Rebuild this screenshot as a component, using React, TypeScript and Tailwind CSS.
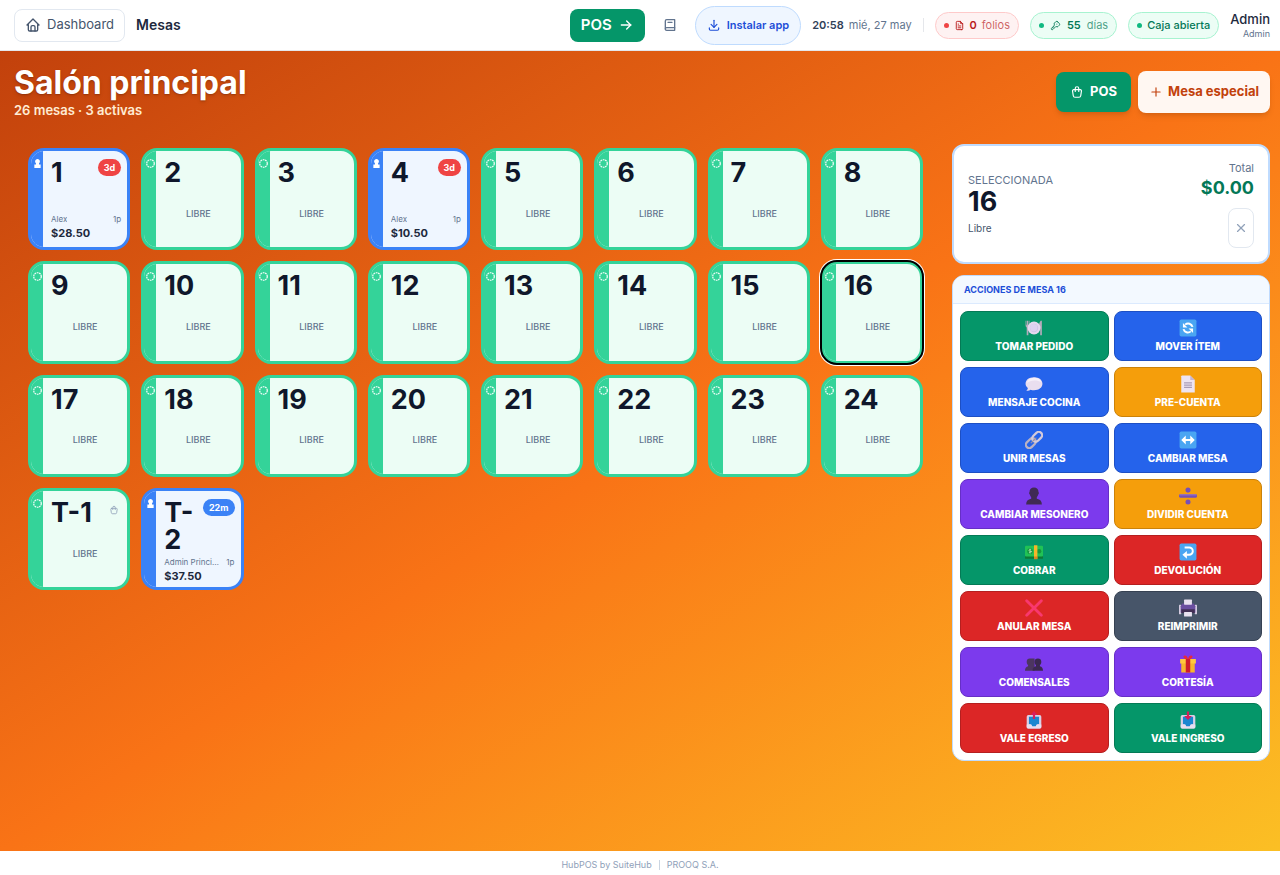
import { ReactNode, useState } from "react";
import clsx from "clsx";
import {
  TbArrowRight,
  TbBook2,
  TbDownload,
  TbFileText,
  TbHome,
  TbKey,
  TbPlus,
  TbShoppingBag,
  TbX,
} from "react-icons/tb";

interface Mesa {
  name: string;
  waiter?: string;
  guests?: number;
  total?: number;
  time?: string;
  late?: boolean;
  takeaway?: boolean;
}

const occupied: Record<string, Mesa> = {
  "1": { name: "1", waiter: "Alex", guests: 1, total: 28.5, time: "3d", late: true },
  "4": { name: "4", waiter: "Alex", guests: 1, total: 10.5, time: "3d", late: true },
};

const mesas: Mesa[] = [
  ...Array.from({ length: 24 }, (_, i) => occupied[String(i + 1)] ?? { name: String(i + 1) }),
  { name: "T-1", takeaway: true },
  { name: "T-2", waiter: "Admin Principal", guests: 1, total: 37.5, time: "22m" },
];

const money = (value: number) => `$${value.toFixed(2)}`;

const Emoji = ({ children }: { children: ReactNode }) => (
  <svg viewBox="0 0 32 32" className="h-[18px] w-[18px]" aria-hidden="true">
    {children}
  </svg>
);

const PlateIcon = () => (
  <Emoji>
    <path d="M1 3v8q0 3 2 4v14h3V15q2-1 2-4V3H6.500v7h-1V3h-2v7h-1V3z" fill="#b4aabb" />
    <path d="M28 3q-4 3-3 14h2v12h3V3z" fill="#b4aabb" />
    <circle cx="16" cy="16" r="11.500" fill="#e3d8ee" />
    <circle cx="16" cy="16" r="7.500" fill="#cfc2e6" />
    <circle cx="15.500" cy="15.500" r="6.500" fill="#ddd2f0" />
  </Emoji>
);

const BlueTile = ({ children }: { children: ReactNode }) => (
  <Emoji>
    <rect x="1" y="1" width="30" height="30" rx="3" fill="#4aa5f2" />
    <g fill="none" stroke="#fff" strokeWidth="3.500">
      {children}
    </g>
  </Emoji>
);

const RefreshIcon = () => (
  <BlueTile>
    <path d="M24 14a8 8 0 0 0-13-4M8 18a8 8 0 0 0 13 4" />
    <path d="M7 7v8h8zM25 25v-8h-8z" fill="#fff" stroke="none" />
  </BlueTile>
);

const SwapIcon = () => (
  <BlueTile>
    <path d="M9 16h14" />
    <path d="M12 8v16l-8-8zM20 8v16l8-8z" fill="#fff" stroke="none" />
  </BlueTile>
);

const ReturnIcon = () => (
  <BlueTile>
    <path d="M10 8h8a6 6 0 0 1 0 13h-5" />
    <path d="M14 14v14l-8-7z" fill="#fff" stroke="none" />
  </BlueTile>
);

const BubbleIcon = () => (
  <Emoji>
    <path
      d="M16 4C7 4 1 9 1 15.500c0 3 1.500 5.500 4 7.500 0 2-1 4-3 5 3 .5 6-.5 8-2 2 .6 4 1 6 1 9 0 15-5 15-11.500S25 4 16 4z"
      fill="#e9deef"
    />
    <path d="M16 5C8 5 4 10 4 14c4-5 18-6 25-1-1-5-6-8-13-8z" fill="#f6f0fa" />
  </Emoji>
);

const PageIcon = () => (
  <Emoji>
    <path d="M5 1h15l8 8v22H4V2z" fill="#ede4f2" />
    <path d="M20 1v8h8z" fill="#c6b5d4" />
    <path d="M9 14h14M9 18h14M9 22h14" stroke="#a99bb8" strokeWidth="1.800" />
  </Emoji>
);

const LinkIcon = () => (
  <Emoji>
    <g fill="none" strokeWidth="4" transform="rotate(-45 16 16)">
      <rect x="-2" y="10" width="20" height="12" rx="6" stroke="#b9b1c4" />
      <rect x="14" y="10" width="20" height="12" rx="6" stroke="#d3cadb" />
      <path d="M8 16h14" stroke="#9b93a8" strokeWidth="2" />
    </g>
  </Emoji>
);

const BustIcon = () => (
  <Emoji>
    <path
      d="M16 1c-5 0-8 3-8 8-1 1-1 4 .5 4.500.5 2 1.500 3.500 2.500 4.500v3c-6 1-9 4-9 10h28c0-6-3-9-9-10v-3c1-1 2-2.500 2.500-4.500C25 13 25 10 24 9c0-5-3-8-8-8z"
      fill="#402a55"
    />
  </Emoji>
);

const BustsIcon = () => (
  <Emoji>
    <path d="M8.500 6C5 6 3 8 3 12c0 3 1 5 2.500 6v2C2 21 0 23 0 28h17V6z" fill="#4c3560" />
    <path
      d="M23 6c-4 0-6 2-6 6 0 3 1 5 2.500 6v2c-4 1-6 3-6 8H32c0-5-2-7-5.500-8v-2c1.500-1 2.500-3 2.500-6 0-4-2-6-6-6z"
      fill="#3b2850"
    />
  </Emoji>
);

const DivideIcon = () => (
  <Emoji>
    <g fill="#7650b8">
      <rect x="0" y="13" width="32" height="6" rx="2" />
      <circle cx="16" cy="5.500" r="4.500" />
      <circle cx="16" cy="26.500" r="4.500" />
    </g>
    <path d="M1 14h30" stroke="#a07bd4" strokeWidth="1.500" />
  </Emoji>
);

const CashIcon = () => (
  <Emoji>
    <rect x="0" y="23" width="32" height="5" rx="1" fill="#0c7a37" />
    <rect x="0" y="5" width="32" height="19" rx="2" fill="#21c255" />
    <circle cx="9" cy="14.500" r="5" fill="#15963f" />
    <path d="M9 10v9M11 12q-4-1-4 1t4 2-4 2" stroke="#d9f7d0" fill="none" />
    <circle cx="25" cy="14.500" r="4" fill="#15963f" />
    <path d="M16 4h6v24h-6z" fill="#f6b62a" />
    <path d="M16 24h6v5h-6z" fill="#d98920" />
  </Emoji>
);

const CrossIcon = () => (
  <Emoji>
    <path d="M3 3l26 26M29 3L3 29" stroke="#f8386f" strokeWidth="5" strokeLinecap="round" />
  </Emoji>
);

const PrinterIcon = () => (
  <Emoji>
    <rect x="0" y="10" width="4" height="17" rx="1" fill="#d5cbe0" />
    <rect x="28" y="10" width="4" height="17" rx="1" fill="#d5cbe0" />
    <path d="M6 8h20l3 5v11H3V13z" fill="#6b4fa0" />
    <path d="M4 18h24v7H4z" fill="#433056" />
    <rect x="9" y="1" width="14" height="9" rx="1" fill="#e9e2f0" />
    <rect x="9" y="23" width="14" height="8" rx="1" fill="#e9e2f0" />
  </Emoji>
);

const GiftIcon = () => (
  <Emoji>
    <path d="M4 13h24v18H4z" fill="#f7b52c" />
    <path d="M2 7h28v8H2z" fill="#ffc83d" />
    <path d="M12 7h8v24h-8z" fill="#cf1d2c" />
    <path d="M16 7C8 9 6 1 10 1s5 3 6 6c1-3 2-6 6-6s2 8-6 6z" fill="#e8293b" />
  </Emoji>
);

const TrayIcon = ({ down }: { down?: boolean }) => (
  <Emoji>
    <rect x="3" y="7" width="26" height="24" rx="3" fill="#d9cfe5" />
    <path d="M7 10h18v13l-4 1-2 3h-6l-2-3-4-1z" fill="#1b86d0" />
    <path d="M3 24h8l2 4h6l2-4h8v5q0 2-2 2H5q-2 0-2-2z" fill="#e7def0" />
    <path d={down ? "M14 1h4v8h5l-7 7-7-7h5z" : "M14 14h4V7h4l-6-7-6 7h4z"} fill="#d61f5c" />
  </Emoji>
);

const colors = {
  green: "bg-[#059669] border-[#047a55]",
  blue: "bg-[#2563eb] border-[#1d4fc4]",
  amber: "bg-[#f59e0b] border-[#cb8209]",
  violet: "bg-[#7c3aed] border-[#662fc6]",
  red: "bg-[#dc2626] border-[#b51f1f]",
  slate: "bg-[#475569] border-[#364152]",
};

const actions: { label: string; color: keyof typeof colors; icon: ReactNode }[] = [
  { label: "TOMAR PEDIDO", color: "green", icon: <PlateIcon /> },
  { label: "MOVER ÍTEM", color: "blue", icon: <RefreshIcon /> },
  { label: "MENSAJE COCINA", color: "blue", icon: <BubbleIcon /> },
  { label: "PRE-CUENTA", color: "amber", icon: <PageIcon /> },
  { label: "UNIR MESAS", color: "blue", icon: <LinkIcon /> },
  { label: "CAMBIAR MESA", color: "blue", icon: <SwapIcon /> },
  { label: "CAMBIAR MESONERO", color: "violet", icon: <BustIcon /> },
  { label: "DIVIDIR CUENTA", color: "amber", icon: <DivideIcon /> },
  { label: "COBRAR", color: "green", icon: <CashIcon /> },
  { label: "DEVOLUCIÓN", color: "red", icon: <ReturnIcon /> },
  { label: "ANULAR MESA", color: "red", icon: <CrossIcon /> },
  { label: "REIMPRIMIR", color: "slate", icon: <PrinterIcon /> },
  { label: "COMENSALES", color: "violet", icon: <BustsIcon /> },
  { label: "CORTESÍA", color: "violet", icon: <GiftIcon /> },
  { label: "VALE EGRESO", color: "red", icon: <TrayIcon /> },
  { label: "VALE INGRESO", color: "green", icon: <TrayIcon down /> },
];

const Header = () => (
  <header className="flex h-[51px] items-center justify-between border-b border-gray-200 bg-white pl-3.5 pr-2.5">
    <div className="flex items-center gap-[11px]">
      <a
        href="#dashboard"
        className="flex h-[33px] items-center gap-1.5 rounded-lg border border-slate-200 px-2.5 text-[13px] text-slate-600"
      >
        <TbHome className="h-4 w-4" />
        Dashboard
      </a>
      <span className="text-sm font-semibold text-slate-800">Mesas</span>
    </div>

    <div className="flex items-center gap-[11px]">
      <a
        href="#pos"
        className="flex h-[33px] items-center gap-1.5 rounded-lg bg-[#059669] px-[11px] text-[15px] font-semibold text-white"
      >
        POS
        <TbArrowRight className="h-4 w-4" />
      </a>
      <button aria-label="Manual" className="flex h-7 w-7 items-center justify-center text-slate-500">
        <TbBook2 className="h-4 w-4" />
      </button>
      <button className="flex h-[39px] items-center gap-1.5 rounded-full border border-[#bfdbfe] bg-[#eff6ff] px-[11px] text-[11px] font-semibold text-[#1d4ed8]">
        <TbDownload className="h-3.5 w-3.5" />
        Instalar app
      </button>
      <div className="flex items-center gap-[5px] text-[11px]">
        <span className="font-semibold text-slate-700">20:58</span>
        <span className="text-slate-500">mié, 27 may</span>
      </div>
      <div className="h-3.5 w-px bg-gray-200" />
      <div className="flex h-[27px] items-center gap-[5px] rounded-full border border-[#fecaca] bg-[#fef2f2] px-2 text-[11px] font-semibold text-[#b91c1c]">
        <span className="h-[5px] w-[5px] rounded-full bg-[#ef4444]" />
        <TbFileText className="h-[11px] w-[11px]" />
        0
        <span className="font-normal text-[#b91c1c]/70">folios</span>
      </div>
      <div className="flex h-[27px] items-center gap-1.5 rounded-full border border-[#a7f3d0] bg-[#ecfdf5] px-2 text-[11px] font-semibold text-[#047857]">
        <span className="h-[5px] w-[5px] rounded-full bg-[#10b981]" />
        <TbKey className="h-[11px] w-[11px]" />
        55
        <span className="font-normal text-[#047857]/70">días</span>
      </div>
      <div className="flex h-[27px] items-center gap-[5px] rounded-full border border-[#a7f3d0] bg-[#ecfdf5] px-2 text-[11px] font-medium text-[#047857]">
        <span className="h-[5px] w-[5px] rounded-full bg-[#10b981]" />
        Caja abierta
      </div>
      <div className="text-right">
        <p className="text-[13px] leading-4 font-medium text-slate-800">Admin</p>
        <p className="text-[9px] leading-[13px] text-slate-500">Admin</p>
      </div>
    </div>
  </header>
);

const MesaCard = ({ mesa, selected, onSelect }: { mesa: Mesa; selected: boolean; onSelect: () => void }) => {
  const busy = mesa.total !== undefined;

  return (
    <button
      onClick={onSelect}
      className={clsx(
        "flex aspect-square min-h-0 min-w-0 overflow-hidden rounded-2xl border-[3px] text-left",
        busy ? "border-[#3b82f6] bg-[#eff6ff]" : "border-[#34d399] bg-[#ecfdf5]",
        selected && "shadow-[0_0_0_2px_#fff] outline-2 -outline-offset-1 outline-black"
      )}
    >
      <span
        className={clsx(
          "flex w-3 shrink-0 justify-center self-stretch pt-1.5 text-white",
          busy ? "bg-[#3b82f6]" : "bg-[#34d399]"
        )}
      >
        <svg viewBox="0 0 10 10" className="mt-0.5 h-[9px] w-[9px]" aria-hidden="true">
          {busy ? (
            <path
              d="M5 0a2.600 2.600 0 0 1 1.700 4.600V6H8.500v4h-7V6h1.800V4.600A2.600 2.600 0 0 1 5 0z"
              fill="currentColor"
            />
          ) : (
            <circle
              cx="5"
              cy="5"
              r="4.200"
              fill="none"
              stroke="currentColor"
              strokeWidth="1.300"
              strokeDasharray="1.900 .74"
            />
          )}
        </svg>
      </span>
      <span className="flex h-full min-w-0 flex-1 flex-col pt-2 pr-1.5 pb-1.5 pl-2">
        <span className="flex items-start justify-between gap-1">
          <span className="min-w-0 text-[27px] leading-[27px] font-bold break-words text-slate-900">{mesa.name}</span>
          {mesa.time && (
            <span
              className={clsx(
                "flex h-[17px] shrink-0 items-center rounded-full px-[6px] text-[9px] font-bold text-white",
                mesa.late ? "bg-[#ef4444]" : "bg-[#3b82f6]"
              )}
            >
              {mesa.time}
            </span>
          )}
          {mesa.takeaway && <TbShoppingBag className="mt-1.5 mr-0.5 h-2.5 w-2.5 shrink-0 text-slate-400" />}
        </span>
        {busy ? (
          <span className="mt-auto pt-0.5">
            <span className="flex justify-between gap-1 text-[8px] leading-[14px] text-slate-500">
              <span className="truncate">{mesa.waiter}</span>
              <span className="shrink-0">{mesa.guests}p</span>
            </span>
            <span className="block text-[11px] leading-[15px] font-bold text-slate-800">{money(mesa.total ?? 0)}</span>
          </span>
        ) : (
          <span className="-mr-1.5 -ml-2 flex flex-1 items-center justify-center text-[9px] font-medium text-slate-500">
            LIBRE
          </span>
        )}
      </span>
    </button>
  );
};

const App = () => {
  const [selected, setSelected] = useState("16");
  const mesa = mesas.find((m) => m.name === selected);

  return (
    <div className="flex min-h-screen flex-col font-[Inter,sans-serif]">
      <Header />

      <main className="flex-1 bg-linear-to-br from-[#c2410c] via-[#f97316] to-[#fbbf24] pt-3.5 pr-2.5 pb-6 pl-3.5">
        <div className="flex items-center justify-between">
          <div className="text-white">
            <h1 className="text-[32px] leading-9 font-bold text-shadow-md">Salón principal</h1>
            <p className="text-[13px] leading-[18px] font-semibold text-orange-100">26 mesas · 3 activas</p>
          </div>
          <div className="flex items-center gap-[7px]">
            <button className="flex h-10 items-center gap-1.5 rounded-lg bg-[#059669] px-3.5 text-[13px] font-bold text-white shadow-md">
              <TbShoppingBag className="h-3.5 w-3.5" />
              POS
            </button>
            <button className="flex h-[42px] items-center gap-[5px] rounded-lg bg-[#fff7f2] px-[11px] text-[13px] font-bold text-[#c2410c] shadow-md">
              <TbPlus className="h-3.5 w-3.5" />
              Mesa especial
            </button>
          </div>
        </div>

        <div className="mt-[25px] flex items-start gap-[15px]">
          <section className="grid flex-1 grid-cols-8 gap-[11px] px-3.5 pt-1">
            {mesas.map((m) => (
              <MesaCard key={m.name} mesa={m} selected={m.name === selected} onSelect={() => setSelected(m.name)} />
            ))}
          </section>

          <aside className="flex w-[318px] shrink-0 flex-col gap-[11px]">
            <section className="flex items-center justify-between rounded-xl border-2 border-[#bfdbfe] bg-white px-3.5 py-3.5">
              <div>
                <p className="text-[11px] leading-[15px] text-slate-500">SELECCIONADA</p>
                <p className="text-[27px] leading-7 font-bold text-slate-900">{selected}</p>
                <p className="mt-1 text-[10px] leading-4 text-slate-600">
                  {mesa?.total === undefined ? "Libre" : "Ocupada"}
                </p>
              </div>
              <div className="flex flex-col items-end">
                <p className="text-[11px] leading-4 text-slate-500">Total</p>
                <p className="text-lg leading-6 font-bold text-[#047857]">{money(mesa?.total ?? 0)}</p>
                <button
                  aria-label="Cerrar"
                  className="mt-2 flex h-10 w-[26px] items-center justify-center rounded-lg border border-slate-200 text-slate-400"
                >
                  <TbX className="h-3.5 w-3.5" />
                </button>
              </div>
            </section>

            <section className="overflow-hidden rounded-xl border border-[#bfdbfe] bg-white">
              <h2 className="border-b border-[#dbeafe] bg-[#f3f9ff] px-[11px] text-[9px] leading-[27px] font-bold text-[#1d4ed8]">
                ACCIONES DE MESA {selected}
              </h2>
              <div className="grid grid-cols-2 gap-x-[5px] gap-y-1.5 p-[7px]">
                {actions.map((action) => (
                  <button
                    key={action.label}
                    className={clsx(
                      "flex h-[50px] flex-col items-center justify-center rounded-lg border pt-0.5 text-[10px] leading-[18px] font-extrabold text-white",
                      colors[action.color]
                    )}
                  >
                    {action.icon}
                    {action.label}
                  </button>
                ))}
              </div>
            </section>
          </aside>
        </div>
      </main>

      <footer className="flex h-6 items-center justify-center gap-[7px] bg-white pt-1 text-[9px] text-slate-400">
        <span>HubPOS by SuiteHub</span>
        <span className="h-2.5 w-px bg-slate-300" />
        <span>PROOQ S.A.</span>
      </footer>
    </div>
  );
};

export default App;
